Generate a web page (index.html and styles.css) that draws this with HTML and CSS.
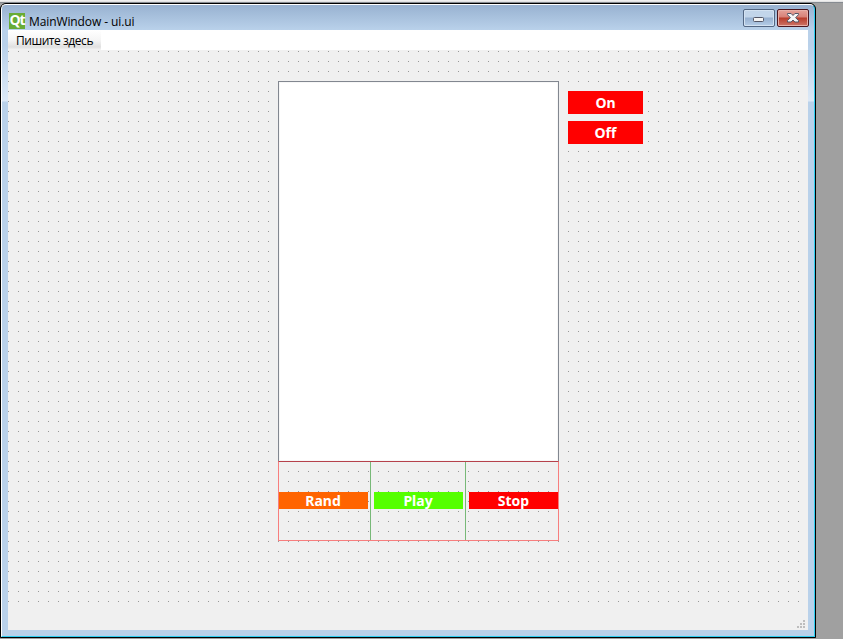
FILE: index.html
```html
<!DOCTYPE html>
<html lang="ru">
<head>
<meta charset="utf-8">
<title>MainWindow - ui.ui</title>
<link rel="stylesheet" href="styles.css">
</head>
<body>
<div class="topstrip"></div>
<div class="window">
  <div class="frame">
    <header class="titlebar">
      <span class="logo">Qt</span>
      <h1 class="title">MainWindow - ui.ui</h1>
      <div class="controls">
        <button class="control minimize" aria-label="Minimize">
          <svg width="30" height="16" viewBox="0 0 30 16"><rect x="9.500" y="7.500" width="10" height="4" rx="1" fill="#f4f4f4" stroke="#535666"/></svg>
        </button>
        <button class="control close" aria-label="Close">
          <svg width="30" height="16" viewBox="0 0 30 16"><path d="M9.500 3.500h3.600l1.900 2 1.900-2h3.600v1.200L17.600 7.700l2.900 2.900v1.400h-3.600L15 10l-1.900 2H9.500v-1.400l2.900-2.900-2.900-3z" fill="#f6f6f6" stroke="#535666"/></svg>
        </button>
      </div>
    </header>
    <nav class="menubar"><span class="menuitem">Пишите здесь</span></nav>
    <main class="canvas">
      <div class="player">
        <div class="list"></div>
        <div class="cells">
          <div class="cell"><button class="btn rand">Rand</button></div>
          <div class="cell"><button class="btn play">Play</button></div>
          <div class="cell"><button class="btn stop">Stop</button></div>
        </div>
      </div>
      <div class="power">
        <button class="btn">On</button>
        <button class="btn">Off</button>
      </div>
    </main>
    <footer class="statusbar">
      <svg width="8" height="8" viewBox="0 0 8 8" fill="#bdbdbd"><path d="M6 0h2v2H6zM3 3h2v2H3zM6 3h2v2H6zM0 6h2v2H0zM3 6h2v2H3zM6 6h2v2H6z"/></svg>
    </footer>
  </div>
</div>
</body>
</html>
```
FILE: styles.css
```css
* { box-sizing: border-box; }
body {
  margin: 0;
  width: 843px;
  height: 639px;
  overflow: hidden;
  background: #a0a0a0;
  font-family: "Noto Sans", sans-serif;
}
button { padding: 0; border: 0; font: inherit; }
svg { display: block; }
.topstrip {
  height: 3px;
  background: linear-gradient(#f0f0f0 0 1px, #e3e3e3 1px 2px, #868b91 2px 3px);
}
.window {
  width: 816px;
  height: 635px;
  border: 1px solid #000;
  border-radius: 6px 6px 0 0;
  background: #000;
}
.frame {
  display: flex;
  flex-direction: column;
  height: 633px;
  padding: 0 6px 6px;
  border: 1px solid #fff;
  border-right-color: #2dcdf0;
  border-bottom-color: #2dcdf0;
  border-radius: 5px 5px 0 0;
  background: linear-gradient(#98b2d1 0, #b9d1ea 25px, #b9d1ea 40px, #dce9f7 96px, #b9d1ea 97px);
}
.titlebar {
  display: flex;
  flex: none;
  height: 25px;
  margin-right: -1px;
}
.logo {
  width: 16px;
  height: 16px;
  margin: 8px 0 0 1px;
  background: #68ac35;
  color: #fff;
  font: bold 14px/14px "Open Sans", sans-serif;
  letter-spacing: -1px;
  text-align: center;
}
.title {
  flex: 1;
  margin: 7px 0 0 4px;
  color: #000;
  font: 12px/19px "Open Sans", sans-serif;
  letter-spacing: -0.1px;
}
.controls { display: flex; gap: 2px; padding-top: 4px; }
.control {
  width: 32px;
  height: 18px;
  border: 1px solid #536783;
  border-radius: 2px;
}
.minimize {
  background: linear-gradient(#c2d5ea 0 7px, #96b0d0 8px, #b6cee8);
  box-shadow: inset 0 0 0 1px #d3e2f2;
}
.close {
  border-color: #4b1720;
  background: linear-gradient(#e5a29a, #d88177 7px, #b83c2b 8px, #cd7568);
  box-shadow: inset 0 0 0 1px #e8b0a8;
}
.menubar { flex: none; height: 20px; background: #fff; }
.menuitem {
  display: block;
  width: 93px;
  height: 20px;
  padding-left: 8px;
  background: linear-gradient(#fff, #f5f5f5 50%, #e0e0e0 85%, #f5f5f5);
  color: #000;
  font: 12px/21px "Open Sans", sans-serif;
  letter-spacing: -0.45px;
  white-space: nowrap;
}
.canvas {
  display: flex;
  flex: none;
  height: 558px;
  align-items: flex-start;
  gap: 9px;
  padding: 31px 0 0 270px;
  background: url("data:image/svg+xml,%3Csvg xmlns='http://www.w3.org/2000/svg' width='10' height='10'%3E%3Crect width='1' height='1' y='1' fill='%23989898'/%3E%3C/svg%3E") #f0f0f0;
}
.player { width: 281px; }
.list {
  height: 380px;
  border: 1px solid #828790;
  border-bottom: 0;
  background: #fff;
  box-shadow: inset 0 0 0 1px #f7f7f7;
}
.cells {
  display: grid;
  grid-template-columns: 91px 95px 93px;
  height: 80px;
  border: 1px solid #f77e7e;
  border-top-color: #b5414b;
}
.cell { padding-top: 30px; }
.cell + .cell { border-left: 1px solid #78b978; padding-left: 3px; }
.btn {
  display: block;
  width: 89px;
  height: 17px;
  background: #f00;
  color: #fff;
  font-size: 14px;
  font-weight: bold;
  line-height: 17px;
  text-align: center;
}
.rand { padding-right: 1px; background: #ff6400; }
.play { padding-right: 1px; background: #5f0; }
.power { display: grid; gap: 7px; padding-top: 10px; }
.power .btn { width: 75px; height: 23px; line-height: 23px; }
.statusbar {
  display: flex;
  flex: 1;
  justify-content: flex-end;
  align-items: flex-end;
  padding: 0 3px 2px;
  background: #f0f0f0;
}
```
